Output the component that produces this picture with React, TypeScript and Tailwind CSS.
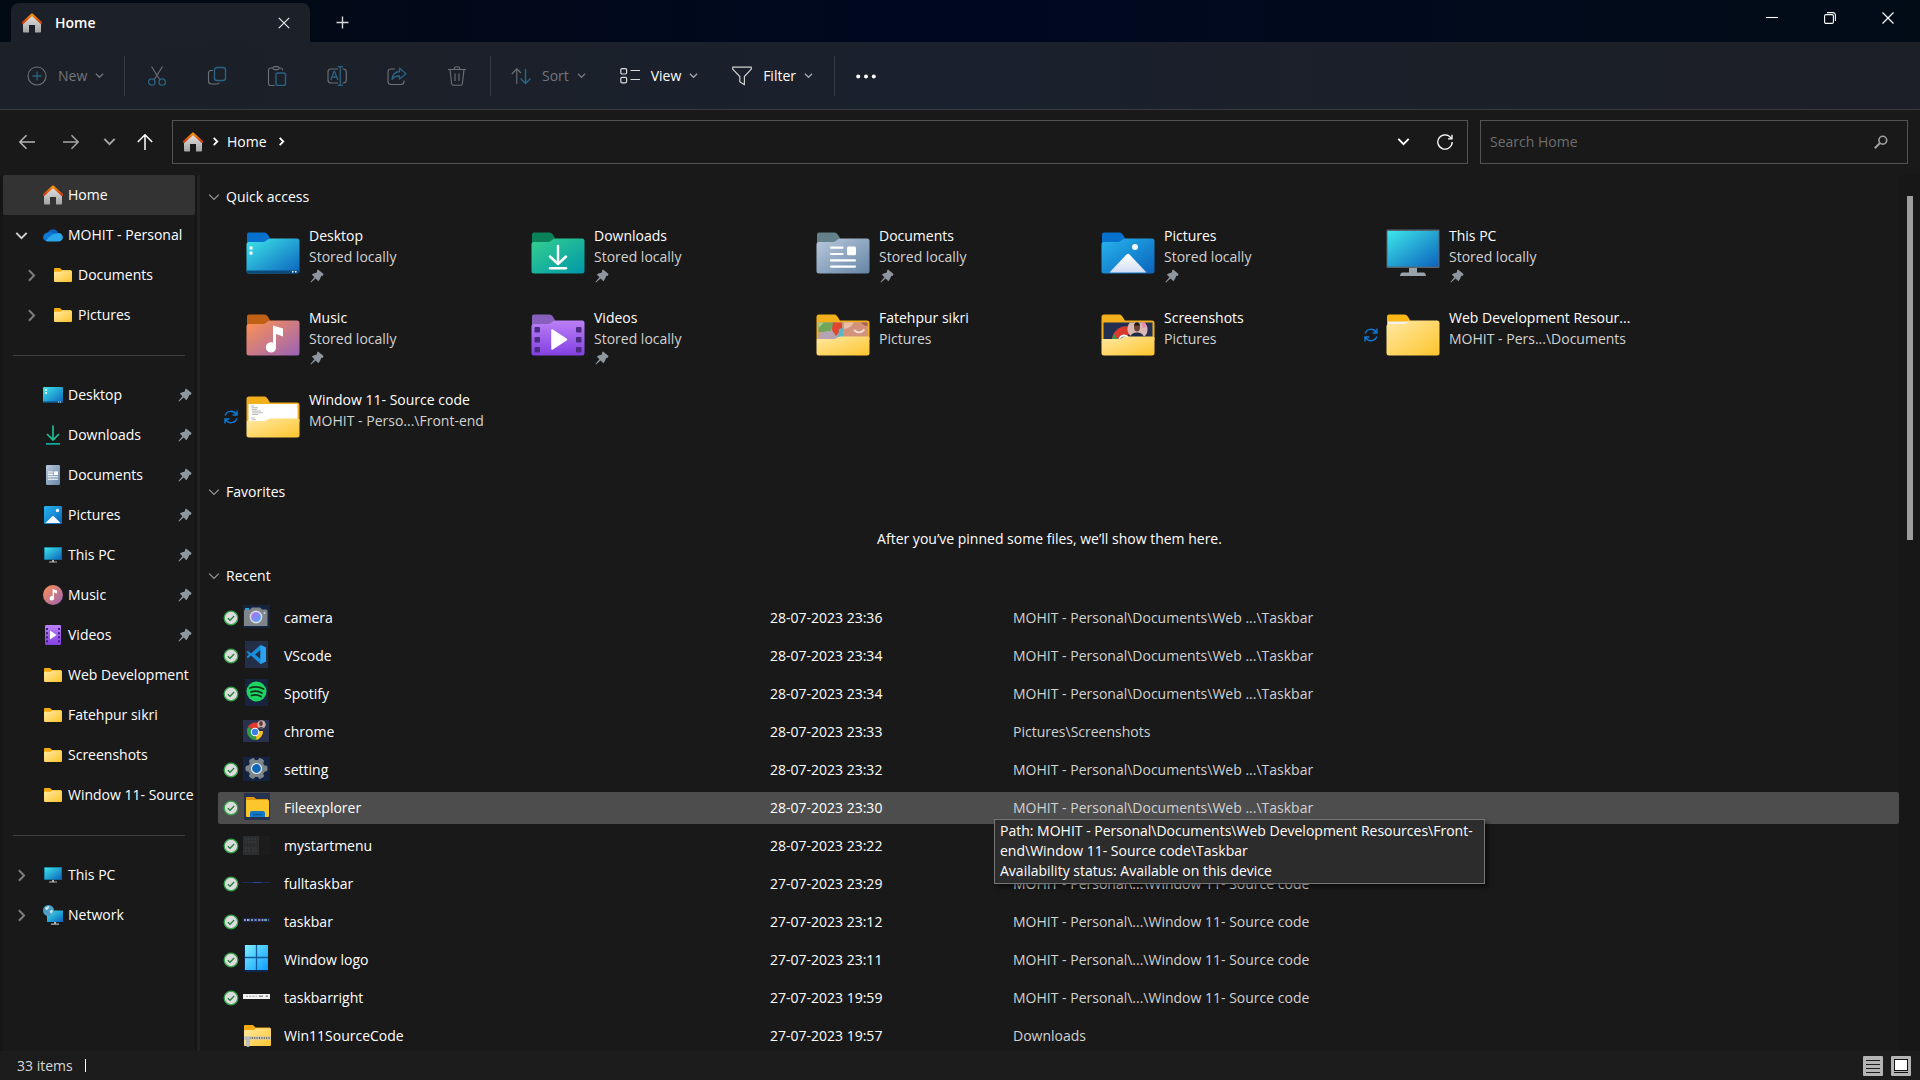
import React from "react";

/* ---------- shared paint ---------- */

const gradients: { id: string; from: string; to: string; diagonal?: boolean }[] = [
  { id: "g-roof", from: "#f79312", to: "#c9380a" },
  { id: "g-wall", from: "#e6e6e6", to: "#a3a3a3" },
  { id: "g-blue", from: "#3ee6ea", to: "#0b62bd", diagonal: true },
  { id: "g-yellow", from: "#ffe9a3", to: "#fdc52e", diagonal: true },
  { id: "g-green", from: "#35d18f", to: "#0097a8", diagonal: true },
  { id: "g-slate", from: "#b9c9dc", to: "#6685a6", diagonal: true },
  { id: "g-sky", from: "#27b4ee", to: "#0a63bb", diagonal: true },
  { id: "g-music", from: "#ff9350", to: "#9a62b8", diagonal: true },
  { id: "g-video", from: "#bb80f6", to: "#8340e2" },
  { id: "g-peak", from: "#ffffff", to: "#d3def5" },
  { id: "g-pane", from: "#7bf0ff", to: "#109cff", diagonal: true },
  { id: "g-lens", from: "#c06cf0", to: "#45a9f5", diagonal: true },
];

function Gradients() {
  return (
    <svg width="0" height="0" className="absolute" aria-hidden="true">
      <defs>
        {gradients.map((g) => (
          <linearGradient key={g.id} id={g.id} x1="0" y1="0" x2={g.diagonal ? "1" : "0"} y2="1">
            <stop offset="0" stopColor={g.from} />
            <stop offset="1" stopColor={g.to} />
          </linearGradient>
        ))}
      </defs>
    </svg>
  );
}

type SvgProps = { w: number; h: number; children: React.ReactNode };

function Svg({ w, h, children }: SvgProps) {
  return (
    <svg width={w} height={h} viewBox={`0 0 ${w} ${h}`} fill="none" className="shrink-0" aria-hidden="true">
      {children}
    </svg>
  );
}

/* ---------- line icons ---------- */

function Chevron({ dir, size = 10, width = 1.4 }: { dir: "down" | "right"; size?: number; width?: number }) {
  const d = dir === "down" ? "M1 3 L5 7 L9 3" : "M3 1 L7 5 L3 9";
  return (
    <svg width={size} height={size} viewBox="0 0 10 10" fill="none" stroke="currentColor" strokeWidth={width} className="shrink-0" aria-hidden="true">
      <path d={d} />
    </svg>
  );
}

function HomeIcon() {
  return (
    <Svg w={20} h={20}>
      <path d="M1 9 L10 1.5 L19 9 V18.5 A1 1 0 0 1 18 19.5 H13 V12 H7 V19.5 H2 A1 1 0 0 1 1 18.5 Z" fill="url(#g-wall)" />
      <path d="M0.8 9.8 L10 1.6 L19.2 9.8" stroke="url(#g-roof)" strokeWidth="2.4" strokeLinejoin="round" strokeLinecap="round" />
    </Svg>
  );
}

const GREY = "#6d7178";
const TEAL = "#2b6384";

function NewIcon() {
  return (
    <Svg w={20} h={20}>
      <circle cx="10" cy="10" r="9" stroke={GREY} strokeWidth="1.1" />
      <path d="M10 5.5 V14.5 M5.5 10 H14.5" stroke={TEAL} strokeWidth="1.3" />
    </Svg>
  );
}
function CutIcon() {
  return (
    <Svg w={20} h={20}>
      <path d="M4.5 0.5 L13 14 M15.5 0.5 L7 14" stroke={GREY} strokeWidth="1.1" />
      <circle cx="4.8" cy="16" r="3.2" stroke={TEAL} strokeWidth="1.3" />
      <circle cx="15.2" cy="16" r="3.2" stroke={TEAL} strokeWidth="1.3" />
    </Svg>
  );
}
function CopyIcon() {
  return (
    <Svg w={20} h={20}>
      <path d="M6 4.5 H4 A2.5 2.5 0 0 0 1.5 7 V15 A3 3 0 0 0 4.5 18 H10 A2.5 2.5 0 0 0 12.3 16.5" stroke={GREY} strokeWidth="1.1" />
      <rect x="7.5" y="1.5" width="11" height="13" rx="2.5" stroke={TEAL} strokeWidth="1.4" />
    </Svg>
  );
}
function PasteIcon() {
  return (
    <Svg w={20} h={20}>
      <path d="M6 2 H3.5 A2 2 0 0 0 1.5 4 V17.5 A2 2 0 0 0 3.5 19.5 H7.5 M12 2 H13.5 A2 2 0 0 1 15.5 4 V4.5" stroke={GREY} strokeWidth="1.1" />
      <rect x="6" y="0.6" width="6" height="3" rx="1.5" stroke={GREY} strokeWidth="1.1" />
      <rect x="9" y="7" width="9.5" height="12.5" rx="1.8" stroke={TEAL} strokeWidth="1.4" />
    </Svg>
  );
}
function RenameIcon() {
  return (
    <Svg w={20} h={20}>
      <path d="M11 3 H4 A3 3 0 0 0 1 6 V14 A3 3 0 0 0 4 17 H11 M15.5 3 H16.5 A3 3 0 0 1 19.3 6 V14 A3 3 0 0 1 16.5 17 H15.5" stroke={GREY} strokeWidth="1.1" />
      <path d="M3.8 14 L7 5.5 H7.6 L10.8 14 M5 11 H9.6" stroke={TEAL} strokeWidth="1.3" />
      <path d="M10.5 0.7 H16 M10.5 19.3 H16 M13.2 0.7 V19.3" stroke={TEAL} strokeWidth="1.3" />
    </Svg>
  );
}
function ShareIcon() {
  return (
    <Svg w={20} h={20}>
      <path d="M8 3 H4 A3 3 0 0 0 1 6 V15.5 A3 3 0 0 0 4 18.5 H14 A3 3 0 0 0 17 15.5 V14.5" stroke={GREY} strokeWidth="1.1" />
      <path d="M12.5 2.2 L19 7.7 L12.5 13 V10 C9 9.8 6.8 11 5 13.5 C5.4 9 8 5.9 12.5 5.5 Z" stroke={TEAL} strokeWidth="1.3" strokeLinejoin="round" />
    </Svg>
  );
}
function DeleteIcon() {
  return (
    <Svg w={20} h={20}>
      <path d="M1 3.5 H19 M7 3.5 A3 2.8 0 0 1 13 3.5 M3 3.5 L4.6 17.5 A2 2 0 0 0 6.6 19.3 H13.4 A2 2 0 0 0 15.4 17.5 L17 3.5 M8 7.5 V15 M12 7.5 V15" stroke={GREY} strokeWidth="1.1" />
    </Svg>
  );
}
function SortIcon() {
  return (
    <Svg w={20} h={20}>
      <path d="M0.8 8 L5.8 2.8 L10 7 M5.8 3 V18" stroke={GREY} strokeWidth="1.1" />
      <path d="M14.5 3 V17.5 M9.5 12.5 L14.5 17.6 L19.5 12.5" stroke={TEAL} strokeWidth="1.4" />
    </Svg>
  );
}
function ViewIcon() {
  return (
    <Svg w={20} h={20}>
      <g stroke="#dcdcdc" strokeWidth="1.2">
        <rect x="0.8" y="2.6" width="5.8" height="5.4" rx="1.2" />
        <rect x="0.8" y="11.4" width="5.8" height="5.4" rx="1.2" />
        <path d="M10.5 4.5 H20 M10.5 13.5 H20" />
      </g>
    </Svg>
  );
}
function FilterIcon() {
  return (
    <Svg w={20} h={20}>
      <path d="M0.7 1.2 H19.3 V3.2 L12.4 10.5 V18.8 L7.8 15.8 V10.5 L0.7 3.2 Z" stroke="#cfcfcf" strokeWidth="1.2" strokeLinejoin="round" />
    </Svg>
  );
}
function DotsIcon() {
  return (
    <Svg w={20} h={20}>
      <g fill="#ffffff">
        <circle cx="2.2" cy="10.5" r="2" />
        <circle cx="10" cy="10.5" r="2" />
        <circle cx="17.8" cy="10.5" r="2" />
      </g>
    </Svg>
  );
}

function Arrow({ dir, color }: { dir: "left" | "right" | "up"; color: string }) {
  const d = {
    left: "M16 8 H1 M7.5 1.2 L0.8 8 L7.5 14.8",
    right: "M0 8 H15 M8.5 1.2 L15.2 8 L8.5 14.8",
    up: "M8 16 V1 M0.8 8 L8 0.8 L15.2 8",
  }[dir];
  return (
    <Svg w={16} h={16}>
      <path d={d} stroke={color} strokeWidth="1.5" />
    </Svg>
  );
}

function PinIcon() {
  return (
    <Svg w={14} h={14}>
      <path d="M8 0.4 L13.6 5 L12.6 7 L11.4 6.8 L9.8 10.2 L8.4 12.2 L5.6 9.4 L1 13.6 L0.4 13 L4.4 8.2 L1.8 5.6 L3.6 4.4 L6.8 3.4 L7.2 1.2 Z" fill="#8e979f" />
    </Svg>
  );
}

function SyncIcon() {
  return (
    <Svg w={14} h={14}>
      <path d="M1.2 5.4 A6 6 0 0 1 12 4.2 M13 0.6 V5 H8.6 M12.8 8.6 A6 6 0 0 1 2 9.8 M1 13.4 V9 H5.4" stroke="#0d7bd8" strokeWidth="1.4" />
    </Svg>
  );
}

function CheckIcon() {
  return (
    <Svg w={16} h={16}>
      <circle cx="8" cy="8" r="6.8" fill="#dcdcdc" stroke="#35a24a" strokeWidth="1.3" />
      <path d="M4.8 8.2 L7 10.3 L11.2 6" stroke="#23803a" strokeWidth="1.3" />
    </Svg>
  );
}

/* ---------- large folder icons ---------- */

function FolderBase({ tab, fill, children }: { tab: string; fill: string; children?: React.ReactNode }) {
  return (
    <Svg w={54} h={42}>
      <path d="M1 13 V2.5 A2 2 0 0 1 3 0.5 H18 C20.5 0.5 21.6 2 23 4.5 L24.5 7 L18 12 Z" fill={tab} />
      <path d="M0.5 12.5 A2.5 2.5 0 0 1 3 10 H17 C20 10 21.5 6.5 25 6.5 H51 A2.5 2.5 0 0 1 53.5 9 V39 A2.5 2.5 0 0 1 51 41.5 H3 A2.5 2.5 0 0 1 0.5 39 Z" fill={fill} />
      {children}
    </Svg>
  );
}

function PhotoFolder({ children }: { children: React.ReactNode }) {
  return (
    <Svg w={54} h={42}>
      <path d="M0.5 3 A2.5 2.5 0 0 1 3 0.5 H18 C21 0.5 21.5 3 24 6.5 H51 A2.5 2.5 0 0 1 53.5 9 V26 H0.5 Z" fill="#f2b01c" />
      {children}
      <path d="M0.5 26 A1.5 1.5 0 0 1 2 25 H18 C20.5 25 21.5 22.5 25 22.5 H52 A1.5 1.5 0 0 1 53.5 24 V39 A2.5 2.5 0 0 1 51 41.5 H3 A2.5 2.5 0 0 1 0.5 39 Z" fill="url(#g-yellow)" />
    </Svg>
  );
}

const bigIcons: Record<string, React.ReactNode> = {
  desktop: (
    <FolderBase tab="#0671cc" fill="url(#g-blue)">
      <path d="M0.5 38.5 H53.5 A2.5 2.5 0 0 1 51 41.5 H3 A2.5 2.5 0 0 1 0.5 38.5 Z" fill="#0c4a79" />
      <path d="M3.5 14.5 H6.5 V17.5 H3.5 Z M3.5 19.5 H6.5 V22.5 H3.5 Z M46 39 H47.5 V40.5 H46 Z M49 39 H50.5 V40.5 H49 Z" fill="#fff" />
    </FolderBase>
  ),
  downloads: (
    <FolderBase tab="#0b8159" fill="url(#g-green)">
      <path d="M27 14 V31 M19 24.5 L27 32 L35 24.5" stroke="#fff" strokeWidth="2.4" strokeLinecap="round" strokeLinejoin="round" />
      <path d="M19 36.3 H35" stroke="#fff" strokeWidth="2.4" strokeLinecap="round" />
    </FolderBase>
  ),
  documents: (
    <FolderBase tab="#64808a" fill="url(#g-slate)">
      <path d="M15 15.7 H26.5 M15 22 H26.5 M15 28.4 H39 M15 34.6 H39" stroke="#fff" strokeWidth="2.2" strokeLinecap="round" />
      <rect x="31" y="14.6" width="9" height="8.6" rx="1.5" fill="#fff" />
    </FolderBase>
  ),
  pictures: (
    <FolderBase tab="#0671cc" fill="url(#g-sky)">
      <path d="M8.5 40.5 L25.5 22.5 Q27 21 28.5 22.5 L45.5 40.5 Z" fill="url(#g-peak)" />
      <circle cx="34" cy="15" r="3" fill="#f2f7ff" />
    </FolderBase>
  ),
  pc: (
    <Svg w={54} h={48}>
      <rect x="0.5" y="0.5" width="53" height="38.5" rx="1" fill="#56656f" />
      <rect x="1.5" y="2" width="51" height="35.5" fill="url(#g-blue)" />
      <path d="M23 39 H31 V43.5 H38 Q40 44 40 47 H14 Q14 44 16 43.5 H23 Z" fill="#99a3ab" />
    </Svg>
  ),
  music: (
    <FolderBase tab="#bf6015" fill="url(#g-music)">
      <path d="M27 11.5 L37 14.5 V22.5 L30 20 V32 A5.2 5.2 0 1 1 27 28.6 Z" fill="#fff" />
    </FolderBase>
  ),
  videos: (
    <FolderBase tab="#8760bd" fill="url(#g-video)">
      <g fill="#4a2b80">
        <rect x="3.5" y="13" width="5.5" height="5.5" rx="1" />
        <rect x="3.5" y="23" width="5.5" height="5.5" rx="1" />
        <rect x="3.5" y="33" width="5.5" height="5.5" rx="1" />
        <rect x="45" y="13" width="5.5" height="5.5" rx="1" />
        <rect x="45" y="23" width="5.5" height="5.5" rx="1" />
        <rect x="45" y="33" width="5.5" height="5.5" rx="1" />
      </g>
      <path d="M21 16 V35 L35.5 25.5 Z" fill="#fff" stroke="#fff" strokeWidth="1.5" strokeLinejoin="round" />
    </FolderBase>
  ),
  family: (
    <PhotoFolder>
      <rect x="2.5" y="8.5" width="49" height="17" fill="#c99a86" />
      <path d="M2.5 8.5 H19 L14 18 H2.5 Z" fill="#6fa65c" />
      <path d="M2.5 8.5 H8 L2.5 14 Z" fill="#a9cf8e" />
      <path d="M2.5 21 Q10 15 18 18 L24 25.5 H2.5 Z" fill="#b5a3b4" />
      <path d="M17 8.5 H26 V15 L20 22 L16 16 Z" fill="#e0452f" />
      <path d="M23 15 L27 14 V24 H22 Z" fill="#5bb6c4" />
      <path d="M28 8.5 H51.5 V25.5 H27 Z" fill="#d3937a" />
      <path d="M28 8.5 H38 Q35 14 28 15 Z" fill="#e9c0a6" />
      <path d="M45 8.5 H51.5 V12 Q48 12 45 8.5 Z" fill="#a5604f" />
      <path d="M38 16 Q43 21 48.5 15.5" stroke="#f4ded8" strokeWidth="1.8" />
    </PhotoFolder>
  ),
  shots: (
    <PhotoFolder>
      <rect x="2.5" y="8.5" width="49" height="17" fill="#232f50" />
      <path d="M11 25.5 A14 14 0 0 1 31 13.5 L25 25.5 Z" fill="#d93a2c" />
      <path d="M10.5 26 L13 20 L17 26 Z" fill="#2e9e4c" />
      <circle cx="23" cy="26" r="5.5" fill="#fff" />
      <circle cx="23" cy="26.5" r="4" fill="#3b78e0" />
      <path d="M29 8.5 H43 A9 9 0 0 1 44 22 H30 A9 9 0 0 1 29 8.5 Z" fill="#d9b9b2" />
      <path d="M40 8.5 H44 L46 13 L42 14 Z" fill="#e58fb0" />
      <ellipse cx="36" cy="13" rx="3" ry="4.6" fill="#6d4433" />
      <path d="M33 11.5 Q33.5 8.5 36 8.5 Q38.5 8.5 39 11.5 Z" fill="#1e1614" />
      <path d="M28 25.5 Q30 18 36 18.5 Q42 18 44 25.5 Z" fill="#1c2a45" />
    </PhotoFolder>
  ),
  folder: (
    <FolderBase tab="#fbb716" fill="url(#g-yellow)">
      <path d="M2 10 V7.5 H23 C21 9.5 19.5 10 17 10 Z" fill="#f3f1ea" />
    </FolderBase>
  ),
  code: (
    <PhotoFolder>
      <rect x="2.5" y="8" width="49" height="18" fill="#ffffff" />
      <path d="M5 10 H8 M5.5 11.7 H12 M5.5 13.4 H11 M6 15.1 H15 M6 16.8 H17 M6 18.5 H12 M5 22 H9 M6 23.7 H10" stroke="#a8a8a8" strokeWidth="0.8" />
    </PhotoFolder>
  ),
};

/* ---------- small sidebar icons (20px) ---------- */

const smallFolder = (
  <Svg w={20} h={20}>
    <path d="M1 4 A1 1 0 0 1 2 3 H7 L9 5 H18 V10 H1 Z" fill="#f5ab12" />
    <path d="M1 7.5 A0.8 0.8 0 0 1 1.8 6.7 H7.5 L9 5.6 H18.2 A0.8 0.8 0 0 1 19 6.4 V16 A1 1 0 0 1 18 17 H2 A1 1 0 0 1 1 16 Z" fill="url(#g-yellow)" />
  </Svg>
);

const smallPc = (
  <Svg w={20} h={20}>
    <rect x="1" y="2" width="18" height="13" fill="#0d5f7c" />
    <rect x="1.6" y="2.6" width="16.8" height="11.8" fill="url(#g-blue)" />
    <path d="M9 15 H11 V16.5 H14 V17.6 H6 V16.5 H9 Z" fill="#aeb6bc" />
  </Svg>
);

const smallIcons: Record<string, React.ReactNode> = {
  home: <HomeIcon />,
  cloud: (
    <Svg w={20} h={20}>
      <path d="M4.5 8 A6 6 0 0 1 15 7 L12 13 H4 Z" fill="#0a62bd" />
      <path d="M4.5 7.5 A5 5 0 0 0 0.4 14 Q2 16.4 5 16.4 L14 9.8 Q10 6.2 4.5 7.5 Z" fill="#0e78d6" />
      <path d="M3 15.8 Q8 8.5 15.3 8 A4.4 4.4 0 0 1 19.8 13 Q19 16.4 15.5 16.4 H5 Q4 16.4 3 15.8 Z" fill="#2aa6ec" />
    </Svg>
  ),
  folder: smallFolder,
  pc: smallPc,
  desktop: (
    <Svg w={20} h={20}>
      <rect x="0" y="2" width="20" height="16" rx="1" fill="url(#g-blue)" />
      <path d="M0 16.6 H20 V17 A1 1 0 0 1 19 18 H1 A1 1 0 0 1 0 17 Z" fill="#0c4a79" />
      <path d="M2.2 4 H4 V5.8 H2.2 Z M2.2 7 H4 V8.8 H2.2 Z M15 16.6 H16 V17.6 H15 Z M17 16.6 H18 V17.6 H17 Z" fill="#fff" />
    </Svg>
  ),
  downloads: (
    <Svg w={20} h={20}>
      <path d="M10 0.5 V14.5 M4 9 L10 15 L16 9" stroke="#1fbf95" strokeWidth="1.7" />
      <path d="M3 18.8 H17" stroke="#10a99b" strokeWidth="1.8" />
    </Svg>
  ),
  documents: (
    <Svg w={20} h={20}>
      <rect x="3" y="0" width="14" height="20" rx="1.2" fill="url(#g-slate)" />
      <path d="M5 7 H10 M5 9.4 H10 M5 11.8 H15 M5 14.2 H15" stroke="#fff" strokeWidth="1.1" />
      <rect x="11" y="6.4" width="4" height="3.6" fill="#fff" />
    </Svg>
  ),
  pictures: (
    <Svg w={20} h={20}>
      <rect x="1" y="1" width="18" height="18" rx="1.2" fill="url(#g-sky)" />
      <path d="M2.5 18 L9 11.4 Q10 10.4 11 11.4 L17.5 18 Z" fill="#f3f7ff" />
      <circle cx="14.5" cy="5.5" r="1.7" fill="#f3f7ff" />
    </Svg>
  ),
  music: (
    <Svg w={20} h={20}>
      <circle cx="10" cy="10" r="10" fill="url(#g-music)" />
      <path d="M9.6 4 L14 5.4 V8.4 L11 7.6 V13 A2.2 2.2 0 1 1 9.6 11.2 Z" fill="#fff" />
    </Svg>
  ),
  videos: (
    <Svg w={20} h={20}>
      <rect x="2" y="0" width="16" height="20" rx="1.2" fill="url(#g-video)" />
      <path d="M3 3 H5 V5 H3 Z M3 7.2 H5 V9.2 H3 Z M3 11.2 H5 V13.2 H3 Z M3 15.2 H5 V17.2 H3 Z M15 3 H17 V5 H15 Z M15 7.2 H17 V9.2 H15 Z M15 11.2 H17 V13.2 H15 Z M15 15.2 H17 V17.2 H15 Z" fill="#3f1f80" />
      <path d="M7 5.5 V14.5 L13.5 10 Z" fill="#fff" />
    </Svg>
  ),
  network: (
    <Svg w={20} h={20}>
      <rect x="4" y="5.5" width="16" height="11.5" fill="url(#g-blue)" />
      <path d="M11 17 H13 V18.6 H16 V19.8 H8 V18.6 H11 Z" fill="#aeb6bc" />
      <circle cx="5.5" cy="5.5" r="5.5" fill="#4c9fc4" />
      <path d="M2 3 Q4 0.6 6.5 1.5 L5 4.5 L3 5 Z M6.5 6 L9.6 4.4 Q10.4 7 8 9 Z" fill="#cfe8f2" />
    </Svg>
  ),
};

/* ---------- recent file thumbnails (28px) ---------- */

const thumbs: Record<string, React.ReactNode> = {
  camera: (
    <Svg w={28} h={28}>
      <rect x="0" y="2" width="27" height="23" fill="#16233f" />
      <path d="M1 8 A1.5 1.5 0 0 1 2.5 6.5 H7 L9 4.5 H17 L19 6.5 H23 A1.5 1.5 0 0 1 24.5 8 V23 H1 Z" fill="#7d858b" />
      <rect x="2" y="5" width="4" height="2" fill="#2f9fd6" />
      <circle cx="13" cy="14" r="6.4" fill="#d8dde0" />
      <circle cx="13" cy="14" r="4.9" fill="url(#g-lens)" />
      <circle cx="21.5" cy="10" r="1" fill="#cfd4d8" />
    </Svg>
  ),
  vscode: (
    <Svg w={28} h={28}>
      <rect x="2" y="0" width="23" height="27" fill="#232e47" />
      <path d="M17.5 4 L23 6.5 V20.5 L17.5 23 L8 14.5 L5 17 L3.5 16 L6 13.5 L3.5 11 L5 10 L8 12.5 Z M17.5 9 L12 13.5 L17.5 18 Z" fill="#1b8fdc" fillRule="evenodd" />
      <path d="M17.5 4 L23 6.5 V20.5 L17.5 23 Z" fill="#2ba3f0" />
    </Svg>
  ),
  spotify: (
    <Svg w={28} h={28}>
      <rect x="2" y="0" width="23" height="27" fill="#17233f" />
      <circle cx="13.5" cy="12.5" r="10" fill="#1ed35f" />
      <path d="M7 9 Q14 6.5 20.5 10 M8 13 Q14 11 19 14 M8.5 16.5 Q13.5 15 18 17.5" stroke="#12301f" strokeWidth="1.8" strokeLinecap="round" />
    </Svg>
  ),
  chrome: (
    <Svg w={28} h={28}>
      <rect x="0" y="3" width="26" height="22" fill="#28314d" />
      <path d="M12.5 14 L5 10 A9 9 0 0 1 19 8 Z" fill="#df3b2e" />
      <path d="M12.5 14 L14 23 A9 9 0 0 1 5 10 Z" fill="#2d9d4a" />
      <path d="M12.5 14 H20 A9 9 0 0 1 13.5 23 Z" fill="#f8c21c" />
      <circle cx="12" cy="15" r="4.2" fill="#fff" />
      <circle cx="12" cy="15" r="3.2" fill="#3d7ee5" />
      <circle cx="18.5" cy="7.5" r="4.2" fill="#cdb0ae" />
      <ellipse cx="18" cy="6.5" rx="1.8" ry="2.6" fill="#5b3a30" />
      <path d="M15 11.5 Q18 8.5 21.5 11.5 Z" fill="#27304b" />
    </Svg>
  ),
  setting: (
    <Svg w={28} h={28}>
      <rect x="0" y="2" width="27" height="24" fill="#14233f" />
      <g fill="#7c858c">
        <circle cx="13.5" cy="13.5" r="8.6" />
        <rect x="10.5" y="2.5" width="6" height="22" rx="2" transform="rotate(30 13.5 13.5)" />
        <rect x="10.5" y="2.5" width="6" height="22" rx="2" transform="rotate(90 13.5 13.5)" />
        <rect x="10.5" y="2.5" width="6" height="22" rx="2" transform="rotate(150 13.5 13.5)" />
      </g>
      <circle cx="13.5" cy="13.5" r="5.6" fill="#e3e7ea" />
      <circle cx="13.5" cy="13.5" r="4.4" fill="#0f67b7" />
    </Svg>
  ),
  explorer: (
    <Svg w={28} h={28}>
      <rect x="1" y="0" width="26" height="27" fill="#27324e" />
      <path d="M3 4 H11 L13 6 H25 V10 H3 Z" fill="#e09a0c" />
      <rect x="3" y="7" width="23" height="17" rx="1" fill="#fcc62d" />
      <path d="M7 24 V20 A2 2 0 0 1 9 18 H20 A2 2 0 0 1 22 20 V24 Z" fill="#1279c6" />
      <path d="M10 21.5 H19" stroke="#0b5c9c" strokeWidth="1.4" />
    </Svg>
  ),
  menu: (
    <Svg w={28} h={28}>
      <rect x="0" y="5" width="27" height="19" fill="#1c1c1c" />
      <rect x="0" y="5" width="16" height="19" fill="#2b2d2f" />
      <path d="M2 8 H14 M2 11 H14 M2 17 H7 M9 17 H14 M2 20 H7 M9 20 H14" stroke="#3e4346" strokeWidth="1.2" strokeDasharray="2 1" />
    </Svg>
  ),
  fullbar: (
    <Svg w={28} h={28}>
      <rect x="0" y="13" width="27" height="1" fill="#1d2a5c" />
      <rect x="10" y="13" width="8" height="1" fill="#2d479c" />
    </Svg>
  ),
  bar: (
    <Svg w={28} h={28}>
      <rect x="0" y="11" width="27" height="4" fill="#1c2858" />
      <path d="M1 13 H26" stroke="#7c8fc2" strokeWidth="1.8" strokeDasharray="2 1.5" />
      <path d="M16 13 H17.5" stroke="#d8584c" strokeWidth="2" />
      <path d="M21 13 H22.5" stroke="#39b36a" strokeWidth="2" />
      <path d="M4 13 H5.5" stroke="#d9b25b" strokeWidth="2" />
    </Svg>
  ),
  windows: (
    <Svg w={28} h={28}>
      <rect x="1" y="0" width="24" height="27" fill="#0f2750" />
      <rect x="2" y="0" width="23" height="25" fill="url(#g-pane)" />
      <path d="M13.5 0 V25 M2 12.5 H25" stroke="#0e5c9b" strokeWidth="1.3" />
    </Svg>
  ),
  barright: (
    <Svg w={28} h={28}>
      <rect x="0" y="11" width="27" height="5" fill="#f2f2f2" />
      <path d="M3 13.3 H14 M22.5 13.3 H25" stroke="#b0b0b0" strokeWidth="1.2" strokeDasharray="2 1.2" />
      <path d="M16 13.3 H20 M23 13.3 H25" stroke="#8a8a8a" strokeWidth="1.6" />
    </Svg>
  ),
  zip: (
    <Svg w={28} h={28}>
      <path d="M1 5 A1 1 0 0 1 2 4 H10 L12.5 6.5 H27 V12 H1 Z" fill="#f5ab12" />
      <path d="M1 10 A1 1 0 0 1 2 9 H11 L13 7.2 H28 V24 A1 1 0 0 1 27 25 H2 A1 1 0 0 1 1 24 Z" fill="url(#g-yellow)" />
      <path d="M1 17 H28" stroke="#c6c6c6" strokeWidth="3" />
      <path d="M4 17 H28" stroke="#6f6440" strokeWidth="2" strokeDasharray="1 1.4" />
      <path d="M2 15.5 H7 V24 Q7 26 5 26 Q3 26 3 24 V19 H2 Z" fill="#b9bcc0" />
    </Svg>
  ),
};

/* ---------- data ---------- */

type Tile = { icon: string; title: string; sub: string; pinned?: boolean; sync?: boolean };
const tiles: Tile[] = [
  { icon: "desktop", title: "Desktop", sub: "Stored locally", pinned: true },
  { icon: "downloads", title: "Downloads", sub: "Stored locally", pinned: true },
  { icon: "documents", title: "Documents", sub: "Stored locally", pinned: true },
  { icon: "pictures", title: "Pictures", sub: "Stored locally", pinned: true },
  { icon: "pc", title: "This PC", sub: "Stored locally", pinned: true },
  { icon: "music", title: "Music", sub: "Stored locally", pinned: true },
  { icon: "videos", title: "Videos", sub: "Stored locally", pinned: true },
  { icon: "family", title: "Fatehpur sikri", sub: "Pictures" },
  { icon: "shots", title: "Screenshots", sub: "Pictures" },
  { icon: "folder", title: "Web Development Resour...", sub: "MOHIT - Pers...\\Documents", sync: true },
  { icon: "code", title: "Window 11- Source code", sub: "MOHIT - Perso...\\Front-end", sync: true },
];

type Recent = { thumb: string; name: string; date: string; path?: string; synced?: boolean; hovered?: boolean };
const taskbarPath = "MOHIT - Personal\\Documents\\Web ...\\Taskbar";
const sourcePath = "MOHIT - Personal\\...\\Window 11- Source code";
const recents: Recent[] = [
  { thumb: "camera", name: "camera", date: "28-07-2023 23:36", path: taskbarPath, synced: true },
  { thumb: "vscode", name: "VScode", date: "28-07-2023 23:34", path: taskbarPath, synced: true },
  { thumb: "spotify", name: "Spotify", date: "28-07-2023 23:34", path: taskbarPath, synced: true },
  { thumb: "chrome", name: "chrome", date: "28-07-2023 23:33", path: "Pictures\\Screenshots" },
  { thumb: "setting", name: "setting", date: "28-07-2023 23:32", path: taskbarPath, synced: true },
  { thumb: "explorer", name: "Fileexplorer", date: "28-07-2023 23:30", path: taskbarPath, synced: true, hovered: true },
  { thumb: "menu", name: "mystartmenu", date: "28-07-2023 23:22", synced: true },
  { thumb: "fullbar", name: "fulltaskbar", date: "27-07-2023 23:29", path: sourcePath, synced: true },
  { thumb: "bar", name: "taskbar", date: "27-07-2023 23:12", path: sourcePath, synced: true },
  { thumb: "windows", name: "Window logo", date: "27-07-2023 23:11", path: sourcePath, synced: true },
  { thumb: "barright", name: "taskbarright", date: "27-07-2023 19:59", path: sourcePath, synced: true },
  { thumb: "zip", name: "Win11SourceCode", date: "27-07-2023 19:57", path: "Downloads" },
];

type NavEntry = { icon: string; label: string; pinned?: boolean; chevron?: "down" | "right"; nested?: boolean; active?: boolean };
const navGroups: NavEntry[][] = [
  [
    { icon: "home", label: "Home", active: true },
    { icon: "cloud", label: "MOHIT - Personal", chevron: "down" },
    { icon: "folder", label: "Documents", chevron: "right", nested: true },
    { icon: "folder", label: "Pictures", chevron: "right", nested: true },
  ],
  [
    { icon: "desktop", label: "Desktop", pinned: true },
    { icon: "downloads", label: "Downloads", pinned: true },
    { icon: "documents", label: "Documents", pinned: true },
    { icon: "pictures", label: "Pictures", pinned: true },
    { icon: "pc", label: "This PC", pinned: true },
    { icon: "music", label: "Music", pinned: true },
    { icon: "videos", label: "Videos", pinned: true },
    { icon: "folder", label: "Web Development" },
    { icon: "folder", label: "Fatehpur sikri" },
    { icon: "folder", label: "Screenshots" },
    { icon: "folder", label: "Window 11- Source" },
  ],
  [
    { icon: "pc", label: "This PC", chevron: "right" },
    { icon: "network", label: "Network", chevron: "right" },
  ],
];

/* ---------- regions ---------- */

function TitleBar() {
  return (
    <header className="flex h-[42px] shrink-0 items-end justify-between bg-linear-to-r from-[#020a13] via-[#000820] to-[#020c17]">
      <div className="flex h-[39px] items-center pl-[11px]">
        <div className="flex h-full w-[299px] items-center rounded-t-lg bg-[#1c2028] pr-[14px] pl-[11px]">
          <HomeIcon />
          <span className="ml-[13px] flex-1 font-semibold">Home</span>
          <button aria-label="Close tab" className="flex size-6 items-center justify-center">
            <Svg w={12} h={12}>
              <path d="M0.8 0.8 L11.2 11.2 M11.2 0.8 L0.8 11.2" stroke="#e8e8e8" strokeWidth="1.2" />
            </Svg>
          </button>
        </div>
        <button aria-label="New tab" className="ml-[18px] flex size-7 items-center justify-center">
          <Svg w={13} h={13}>
            <path d="M6.5 0.5 V12.5 M0.5 6.5 H12.5" stroke="#d6d6d6" strokeWidth="1.4" />
          </Svg>
        </button>
      </div>
      <div className="mr-[3px] flex h-full items-start">
        <button aria-label="Minimize" className="flex h-9 w-[58px] items-center justify-center">
          <Svg w={12} h={12}>
            <path d="M0 5.5 H12" stroke="#fff" strokeWidth="1.1" />
          </Svg>
        </button>
        <button aria-label="Restore" className="flex h-9 w-[58px] items-center justify-center">
          <Svg w={12} h={12}>
            <rect x="0.6" y="2.6" width="8.8" height="8.8" rx="1.4" stroke="#fff" strokeWidth="1.1" />
            <path d="M3 0.6 H9 A2.4 2.4 0 0 1 11.4 3 V9" stroke="#fff" strokeWidth="1.1" />
          </Svg>
        </button>
        <button aria-label="Close" className="flex h-9 w-[58px] items-center justify-center">
          <Svg w={12} h={12}>
            <path d="M0.5 0.5 L11.5 11.5 M11.5 0.5 L0.5 11.5" stroke="#fff" strokeWidth="1.2" />
          </Svg>
        </button>
      </div>
    </header>
  );
}

function Divider() {
  return <div className="h-10 w-px shrink-0 bg-[#353a43]" />;
}

function MenuButton({ icon, label, dim }: { icon: React.ReactNode; label: string; dim?: boolean }) {
  return (
    <button disabled={dim} className={`flex h-10 items-center ${dim ? "text-[#73767c]" : "text-white"}`}>
      {icon}
      <span className="mr-2 ml-[11px]">{label}</span>
      <span className={dim ? "" : "text-[#a5a8ad]"}>
        <Chevron dir="down" size={9} />
      </span>
    </button>
  );
}

function CommandBar() {
  const tools: [string, React.ReactNode][] = [
    ["Cut", <CutIcon />],
    ["Copy", <CopyIcon />],
    ["Paste", <PasteIcon />],
    ["Rename", <RenameIcon />],
    ["Share", <ShareIcon />],
    ["Delete", <DeleteIcon />],
  ];
  return (
    <div className="flex h-[68px] shrink-0 items-center border-b border-[#3b3c40] bg-linear-to-r from-[#1c2027] via-[#1a202d] to-[#1c1f25]">
      <div className="w-[124px] pl-[27px]">
        <MenuButton icon={<NewIcon />} label="New" dim />
      </div>
      <Divider />
      <div className="flex pr-[3px] pl-[2px]">
        {tools.map(([label, icon]) => (
          <button key={label} aria-label={label} disabled className="flex h-10 w-[60px] items-center justify-center">
            {icon}
          </button>
        ))}
      </div>
      <Divider />
      <div className="flex w-[343px] justify-between pr-[21px] pl-5">
        <MenuButton icon={<SortIcon />} label="Sort" dim />
        <MenuButton icon={<ViewIcon />} label="View" />
        <MenuButton icon={<FilterIcon />} label="Filter" />
      </div>
      <Divider />
      <button aria-label="See more" className="ml-[21px] flex h-10 items-center">
        <DotsIcon />
      </button>
    </div>
  );
}

function AddressRow() {
  return (
    <div className="flex h-[65px] shrink-0 items-center pr-3 pb-[2px]">
      <div className="flex w-[172px] shrink-0 items-center text-[#a6a6a6]">
        <button aria-label="Back" className="ml-[7px] flex h-10 w-10 items-center justify-center">
          <Arrow dir="left" color="#b5b5b5" />
        </button>
        <button aria-label="Forward" className="ml-1 flex h-10 w-10 items-center justify-center">
          <Arrow dir="right" color="#a6a6a6" />
        </button>
        <button aria-label="Recent locations" className="flex h-10 w-9 items-center justify-center">
          <Chevron dir="down" size={13} width={1.5} />
        </button>
        <button aria-label="Up" className="flex h-10 w-9 items-center justify-center">
          <Arrow dir="up" color="#ffffff" />
        </button>
      </div>
      <div className="flex h-11 flex-1 items-center border border-[#535353] pl-[10px]">
        <HomeIcon />
        <span className="mx-2 flex w-2 justify-center">
          <Chevron dir="right" size={9} width={2} />
        </span>
        <a href="#home">Home</a>
        <span className="ml-[10px]">
          <Chevron dir="right" size={9} width={2} />
        </span>
        <button aria-label="Previous locations" className="ml-auto flex h-10 w-10 items-center justify-center">
          <Chevron dir="down" size={13} width={1.5} />
        </button>
        <button aria-label="Refresh" className="flex h-10 w-11 items-center justify-center">
          <Svg w={16} h={16}>
            <path d="M14 4 A7.2 7.2 0 1 0 15.2 8 M15 0.8 V4.8 H11" stroke="#fff" strokeWidth="1.3" />
          </Svg>
        </button>
      </div>
      <label className="ml-3 flex h-11 w-[428px] shrink-0 items-center border border-[#535353] pr-[19px] pl-[9px]">
        <input aria-label="Search Home" placeholder="Search Home" className="min-w-0 flex-1 bg-transparent outline-none placeholder:text-[#6e6e6e]" />
        <Svg w={14} h={14}>
          <circle cx="8.8" cy="5.2" r="3.9" stroke="#a0a0a0" strokeWidth="1.6" />
          <path d="M6 8 L0.8 13.2" stroke="#a0a0a0" strokeWidth="2" />
        </Svg>
      </label>
    </div>
  );
}

function NavItem({ entry }: { entry: NavEntry }) {
  return (
    <a
      href={`#${entry.label}`}
      className={`flex h-10 items-center overflow-hidden whitespace-nowrap rounded-xs ${entry.active ? "bg-[#333333]" : ""}`}
    >
      <span
        className={`flex shrink-0 items-center ${entry.nested ? "w-[50px] pl-[22px]" : "w-10 pl-3"} ${
          entry.chevron === "down" ? "text-[#cfcfcf]" : "text-[#7d7d7d]"
        }`}
      >
        {entry.chevron && <Chevron dir={entry.chevron} size={13} width={1.5} />}
      </span>
      {smallIcons[entry.icon]}
      <span className="ml-[5px] flex-1 leading-[22px]">{entry.label}</span>
      {entry.pinned && (
        <span className="mr-[3px]">
          <PinIcon />
        </span>
      )}
    </a>
  );
}

function Sidebar() {
  return (
    <nav aria-label="Folders" className="w-[195px] shrink-0 overflow-hidden border-l-3 border-[#151515]">
      {navGroups.map((group, i) => (
        <React.Fragment key={i}>
          {i > 0 && (
            <div className="flex h-10 items-center pr-[10px] pl-[10px]">
              <div className="h-px flex-1 bg-[#3d3d3d]" />
            </div>
          )}
          {group.map((entry, j) => (
            <NavItem key={j} entry={entry} />
          ))}
        </React.Fragment>
      ))}
    </nav>
  );
}

function SectionHeader({ children }: { children: React.ReactNode }) {
  return (
    <h2>
      <button className="flex h-8 items-center gap-[6px] pl-2">
        <span className="text-[#9a9a9a]">
          <Chevron dir="down" size={12} width={1} />
        </span>
        {children}
      </button>
    </h2>
  );
}

function QuickAccess() {
  return (
    <ul className="mt-3 ml-[18px] grid grid-cols-[repeat(auto-fill,285px)]">
      {tiles.map((t) => (
        <li key={t.title} className="flex h-[82px] items-start">
          <span className="flex h-14 w-7 shrink-0 items-center pl-[6px]">{t.sync && <SyncIcon />}</span>
          <span className="flex h-14 shrink-0 items-center">{bigIcons[t.icon]}</span>
          <div className="ml-[9px] leading-[21px] whitespace-nowrap">
            <p>{t.title}</p>
            <p className="text-[#d2d2d2]">{t.sub}</p>
            {t.pinned && (
              <span className="mt-[2px] ml-px block">
                <PinIcon />
              </span>
            )}
          </div>
        </li>
      ))}
    </ul>
  );
}

function Tooltip() {
  return (
    <div
      role="tooltip"
      className="absolute top-[27px] -left-[19px] z-10 w-[491px] border border-[#767676] bg-[#2c2c2c] px-[5px] pt-px pb-[2px] leading-5 whitespace-nowrap text-white shadow-[3px_3px_4px_rgba(0,0,0,0.5)]"
    >
      Path: MOHIT - Personal\Documents\Web Development Resources\Front-
      <br />
      end\Window 11- Source code\Taskbar
      <br />
      Availability status: Available on this device
    </div>
  );
}

function RecentTable() {
  return (
    <table className="mt-1 ml-[18px] w-[calc(100%-18px)] table-fixed border-separate border-spacing-x-0 border-spacing-y-[6px]">
      <colgroup>
        <col className="w-[66px]" />
        <col className="w-[486px]" />
        <col className="w-[243px]" />
        <col />
      </colgroup>
      <tbody>
        {recents.map((r) => (
          <tr key={r.name} className={`h-8 ${r.hovered ? "bg-[#4d4d4d]" : ""}`}>
            <td className="rounded-l-xs p-0">
              <div className="flex h-8 items-center pl-[5px]">
                <span className="flex w-5">{r.synced && <CheckIcon />}</span>
                <span className="pb-[2px]">{thumbs[r.thumb]}</span>
              </div>
            </td>
            <td className="p-0 leading-5">{r.name}</td>
            <td className="p-0 leading-5">{r.date}</td>
            <td className="relative rounded-r-xs p-0 leading-5 text-[#d2d2d2]">
              {r.path}
              {r.hovered && <Tooltip />}
            </td>
          </tr>
        ))}
      </tbody>
    </table>
  );
}

function StatusBar() {
  return (
    <footer className="flex h-[29px] shrink-0 items-center bg-[#1c1c1c] pr-[9px] pl-[17px] text-[#d8d8d8]">
      <span>33 items</span>
      <span className="ml-3 h-[13px] w-px bg-white" />
      <div className="ml-auto flex gap-2">
        <button aria-label="Details view">
          <Svg w={20} h={20}>
            <rect width="20" height="20" rx="1" fill="#b4b4b4" />
            <path d="M3 4.5 H17 M3 8.5 H17 M3 12.5 H17 M3 16.5 H17" stroke="#1c1c1c" strokeWidth="1" />
          </Svg>
        </button>
        <button aria-label="Large thumbnails view">
          <Svg w={20} h={20}>
            <rect width="20" height="20" rx="1" fill="#b4b4b4" />
            <rect x="3.5" y="3.5" width="13" height="11" fill="#fff" stroke="#111" />
            <path d="M3 16.5 H17" stroke="#111" />
          </Svg>
        </button>
      </div>
    </footer>
  );
}

export default function App() {
  return (
    <div className="flex h-screen flex-col overflow-hidden bg-[#191919] font-['Open_Sans','Noto_Sans',sans-serif] text-[14px] leading-5 text-white">
      <Gradients />
      <TitleBar />
      <CommandBar />
      <AddressRow />
      <div className="flex min-h-0 flex-1">
        <Sidebar />
        <div className="w-[5px] shrink-0 border-r-3 border-[#222222] bg-[#151515]" />
        <main className="min-w-0 flex-1 overflow-hidden pt-[6px]">
          <SectionHeader>Quick access</SectionHeader>
          <QuickAccess />
          <div className="mt-[5px]">
            <SectionHeader>Favorites</SectionHeader>
          </div>
          <p className="mt-[21px] mb-[11px] text-center">After you’ve pinned some files, we’ll show them here.</p>
          <SectionHeader>Recent</SectionHeader>
          <RecentTable />
        </main>
        <div className="w-[21px] shrink-0 bg-[#171717] pt-[21px] pl-2">
          <div className="h-[344px] w-[6px] bg-[#9d9d9d]" />
        </div>
      </div>
      <StatusBar />
    </div>
  );
}
